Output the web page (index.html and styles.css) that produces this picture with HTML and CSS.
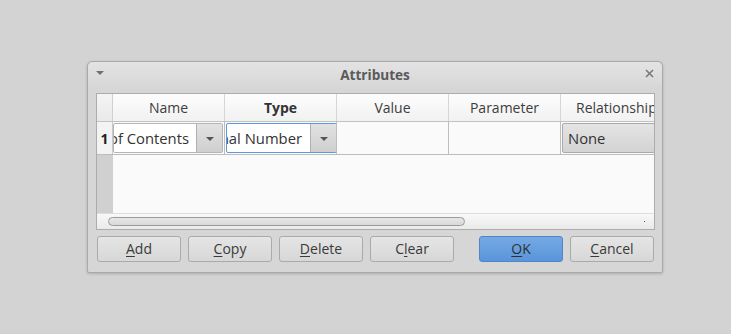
FILE: index.html
```html
<!DOCTYPE html>
<html>
<head>
<meta charset="utf-8">
<link rel="stylesheet" href="styles.css">
</head>
<body>
<div class="dialog">
  <div class="titlebar">
    <span class="tb-side"><span class="menu-arrow"></span></span>
    <span class="title">Attributes</span>
    <span class="tb-side right"><svg class="close" width="9" height="9" viewBox="0 0 9 9"><path d="M1 1L8 8M8 1L1 8" stroke="#7a7a7a" stroke-width="1.6"/></svg></span>
  </div>
  <div class="body">
    <div class="table">
      <div class="grid">
        <div class="hrow">
          <div class="corner"></div>
          <div class="hcell c1">Name</div>
          <div class="hcell c2 bold">Type</div>
          <div class="hcell c3">Value</div>
          <div class="hcell c4">Parameter</div>
          <div class="hcell c5">Relationship</div>
        </div>
        <div class="drow">
          <div class="rowhead">1</div>
          <div class="dcell c1">
            <div class="combo">
              <div class="field"><span>Table of Contents</span></div>
              <div class="drop"><span class="tri"></span></div>
            </div>
          </div>
          <div class="dcell c2">
            <div class="combo focus">
              <div class="field"><span>Decimal Number</span></div>
              <div class="drop"><span class="tri"></span></div>
            </div>
          </div>
          <div class="dcell c3"></div>
          <div class="dcell c4"></div>
          <div class="dcell c5">
            <div class="selbtn">None</div>
          </div>
        </div>
        <div class="empty">
          <div class="emptyhead"></div>
          <div class="emptybody"></div>
        </div>
      </div>
      <div class="hscroll">
        <div class="thumb"></div>
        <span class="dot"></span>
      </div>
    </div>
    <div class="buttons">
      <button class="btn"><u>A</u>dd</button>
      <button class="btn"><u>C</u>opy</button>
      <button class="btn"><u>D</u>elete</button>
      <button class="btn">C<u>l</u>ear</button>
      <span class="spacer"></span>
      <button class="btn ok"><u>O</u>K</button>
      <button class="btn"><u>C</u>ancel</button>
    </div>
  </div>
</div>
</body>
</html>
```

FILE: styles.css
```css
html, body {
  margin: 0;
  padding: 0;
}
body {
  width: 731px;
  height: 334px;
  background: #d3d3d3;
  font-family: "Open Sans", sans-serif;
  font-size: 14px;
  color: #3a3a3a;
  overflow: hidden;
}
.dialog {
  margin: 61px 0 0 87px;
  width: 574px;
  height: 210px;
  border: 1px solid #a9a9a9;
  border-radius: 5px 5px 2px 2px;
  background: #d6d6d6;
  box-shadow: 0 1px 3px rgba(0,0,0,0.18);
  display: flex;
  flex-direction: column;
}
.titlebar {
  height: 24px;
  display: flex;
  align-items: center;
  padding: 0 8px 0 8px;
  background: linear-gradient(#e3e3e3, #d8d8d8);
  border-radius: 5px 5px 0 0;
}
.tb-side {
  width: 14px;
  display: flex;
  align-items: center;
}
.tb-side.right { justify-content: flex-end; }
.menu-arrow {
  width: 0;
  height: 0;
  border-left: 4px solid transparent;
  border-right: 4px solid transparent;
  border-top: 4px solid #707070;
  margin-top: -3px;
}
.title {
  flex: 1;
  text-align: center;
  font-weight: bold;
  font-size: 13.6px;
  color: #5a5a5a;
}
.close {
  margin-top: -1px;
}
.body {
  padding: 7px 8px 0 8px;
  display: flex;
  flex-direction: column;
}
.table {
  width: 557px;
  height: 135px;
  border: 1px solid #acacac;
  background: #fafafa;
  display: flex;
  flex-direction: column;
  overflow: hidden;
}
.grid {
  flex: 1;
  display: flex;
  flex-direction: column;
  overflow: hidden;
}
.hrow {
  height: 27px;
  display: flex;
  background: linear-gradient(#fdfdfd, #f1f1f1);
  border-bottom: 1px solid #c2c2c2;
}
.corner {
  width: 15px;
  flex: none;
  border-right: 1px solid #d0d0d0;
  background: linear-gradient(#f4f4f4, #e9e9e9);
}
.hcell {
  flex: none;
  width: 112px;
  border-right: 1px solid #d6d6d6;
  display: flex;
  align-items: center;
  justify-content: center;
  color: #3d3d3d;
  white-space: nowrap;
  overflow: hidden;
  padding-bottom: 1px;
  box-sizing: border-box;
}
.hcell.bold { font-weight: bold; color: #333; }
.hcell.c5 { width: 94px; border-right: none; justify-content: flex-start; padding-left: 15px; }
.drow {
  height: 32px;
  display: flex;
  border-bottom: 1px solid #bdbdbd;
}
.rowhead {
  width: 15px;
  flex: none;
  border-right: 1px solid #c8c8c8;
  background: #f3f3f3;
  font-weight: bold;
  color: #222;
  display: flex;
  align-items: center;
  justify-content: center;
}
.dcell {
  flex: none;
  width: 112px;
  box-sizing: border-box;
  border-right: 1px solid #bdbdbd;
  display: flex;
  align-items: center;
  overflow: hidden;
}
.dcell.c5 { width: 94px; border-right: none; padding-left: 1px; }
.combo {
  width: 110px;
  height: 30px;
  box-sizing: border-box;
  display: flex;
  border: 1px solid #b5b5b5;
  border-radius: 2px;
  background: #fff;
}
.dcell.c2 .combo { margin-left: 1px; width: 111px; }
.combo.focus { border-color: #5b9ae0; }
.field {
  flex: 1;
  overflow: hidden;
  display: flex;
  justify-content: flex-end;
  align-items: center;
  padding-right: 7px;
  white-space: nowrap;
  color: #333;
  font-size: 14.8px;
}
.combo.focus .field { padding-right: 8px; }
.drop {
  width: 25px;
  flex: none;
  background: linear-gradient(#e2e2e2, #cfcfcf);
  border-left: 1px solid #b0b0b0;
  display: flex;
  align-items: center;
  justify-content: center;
}
.tri {
  width: 0;
  height: 0;
  border-left: 4px solid transparent;
  border-right: 4px solid transparent;
  border-top: 4px solid #555;
  margin-top: 2px;
}
.selbtn {
  width: 100px;
  height: 30px;
  box-sizing: border-box;
  border: 1px solid #aaa;
  border-radius: 2px;
  background: linear-gradient(#e4e4e4, #d3d3d3);
  display: flex;
  align-items: center;
  padding-left: 5px;
  color: #333;
  font-size: 14.8px;
}
.empty {
  flex: 1;
  display: flex;
}
.emptyhead {
  width: 16px;
  background: #d0d0d0;
}
.emptybody {
  flex: 1;
  background: #fafafa;
}
.hscroll {
  height: 15px;
  flex: none;
  background: linear-gradient(#f8f8f8, #eaeaea);
  border-top: 1px solid #dedede;
  display: flex;
  align-items: center;
  padding-left: 11px;
}
.thumb {
  width: 357px;
  height: 9px;
  box-sizing: border-box;
  border: 1px solid #9b9b9b;
  border-radius: 5px;
  background: linear-gradient(#e6e6e6, #d9d9d9);
}
.dot {
  width: 1px;
  height: 1px;
  background: #555;
  margin-left: auto;
  margin-right: 9px;
}
.buttons {
  display: flex;
  gap: 7px;
  margin-top: 6px;
  padding-left: 1px;
}
.spacer { width: 11px; }
.btn {
  width: 84px;
  height: 26px;
  box-sizing: border-box;
  border: 1px solid #aaaaaa;
  border-radius: 3px;
  background: linear-gradient(#e5e5e5, #d7d7d7);
  font-family: "Open Sans", sans-serif;
  font-size: 14px;
  color: #3a3a3a;
  padding: 0;
  line-height: 24px;
}
.btn u { text-decoration-thickness: 1px; text-underline-offset: 2px; }
.btn.ok {
  background: linear-gradient(#75a9e5, #5a95da);
  border-color: #4f86c8;
  color: #2f2f2f;
}
```
